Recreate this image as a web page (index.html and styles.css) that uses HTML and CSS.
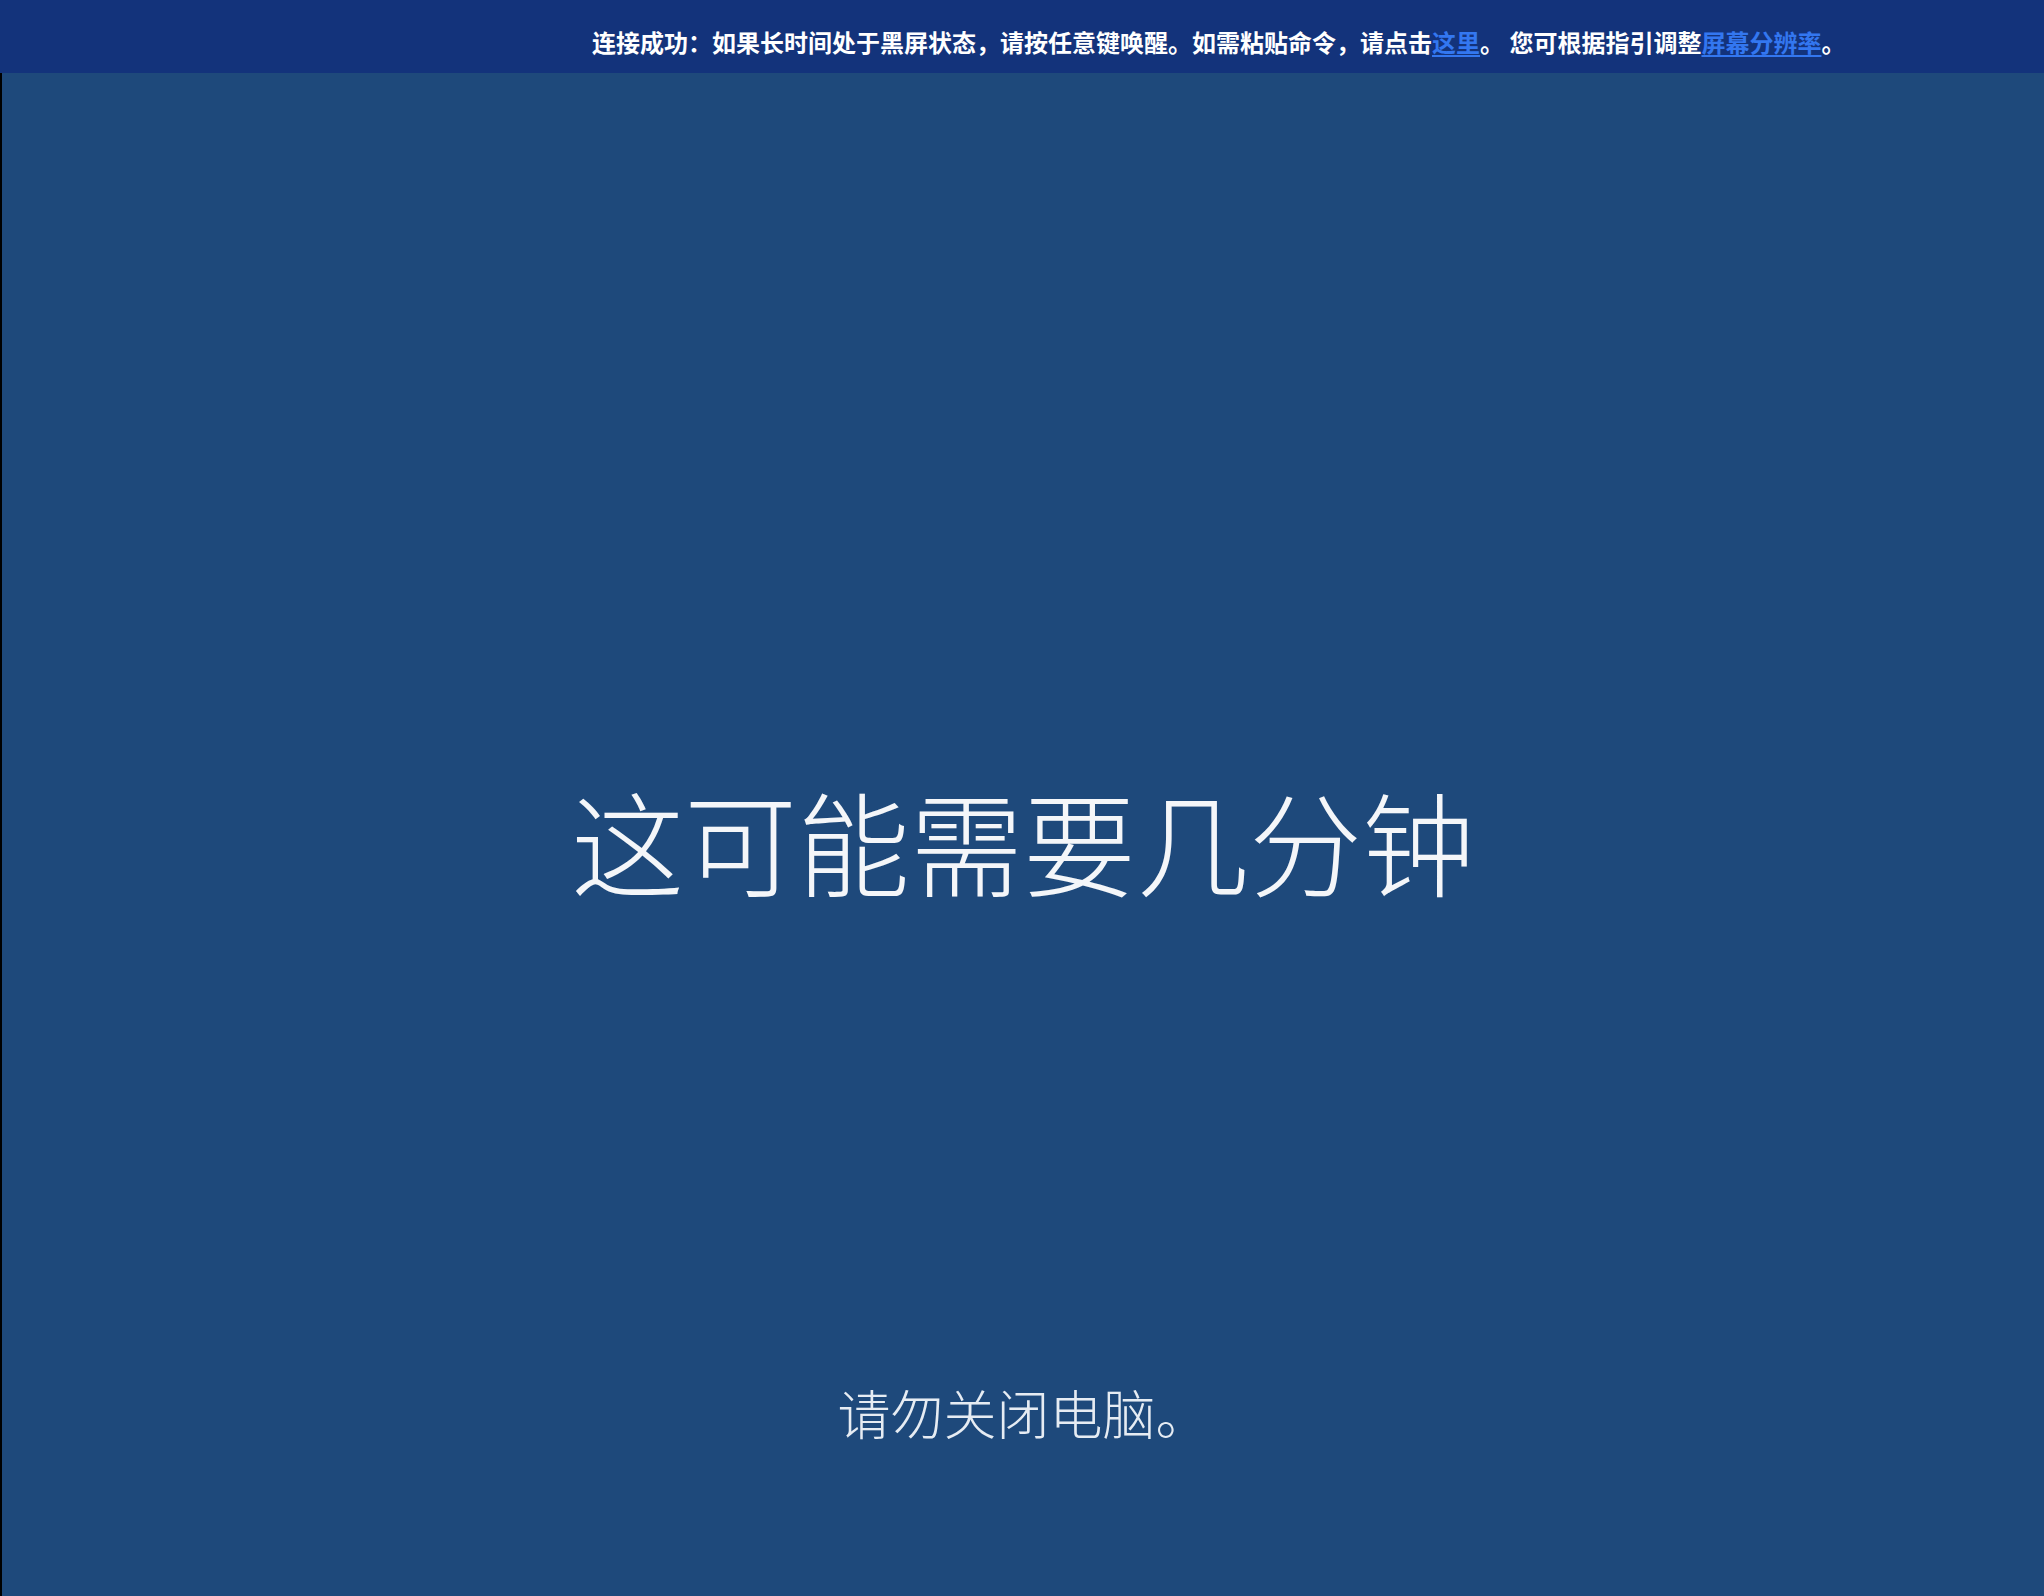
FILE: index.html
```html
<!DOCTYPE html>
<html lang="zh-CN">
<head>
<meta charset="utf-8">
<title>这可能需要几分钟</title>
<link rel="stylesheet" href="styles.css">
</head>
<body>
<div class="page">
  <div class="topbar">
    <p class="notice">连接成功：如果长时间处于黑屏状态，请按任意键唤醒。如需粘贴命令，请点击<a class="link" href="#">这里</a>。 您可根据指引调整<a class="link" href="#">屏幕分辨率</a>。</p>
  </div>
  <div class="screen">
    <h1 class="title">这可能需要几分钟</h1>
    <p class="subtitle">请勿关闭电脑。</p>
  </div>
</div>
</body>
</html>
```

FILE: styles.css
```css
html, body {
  margin: 0;
  padding: 0;
  height: 100%;
}
body {
  background: #1e497b;
  font-family: "Noto Sans CJK SC", "Noto Sans", sans-serif;
  overflow: hidden;
}
.page {
  display: flex;
  flex-direction: column;
  height: 1596px;
}
.topbar {
  box-sizing: border-box;
  height: 73px;
  background: #13337b;
  padding: 30px 0 0 592px;
  flex: none;
}
.notice {
  margin: 0;
  font-size: 24px;
  line-height: 24px;
  font-weight: 700;
  color: #ffffff;
  white-space: nowrap;
}
.link {
  color: #3377f0;
  text-decoration: underline;
  text-underline-offset: 3px;
}
.screen {
  flex: 1;
  display: flex;
  flex-direction: column;
  align-items: center;
  border-left: 2px solid #000000;
  padding: 710px 0 157px;
  box-sizing: border-box;
}
.title {
  margin: 0;
  font-size: 113px;
  line-height: 113px;
  font-weight: 300;
  color: #f4f6f9;
  white-space: nowrap;
}
.subtitle {
  margin: auto 0 0;
  font-size: 53px;
  line-height: 53px;
  font-weight: 300;
  color: #e6ecf3;
  white-space: nowrap;
}
```
